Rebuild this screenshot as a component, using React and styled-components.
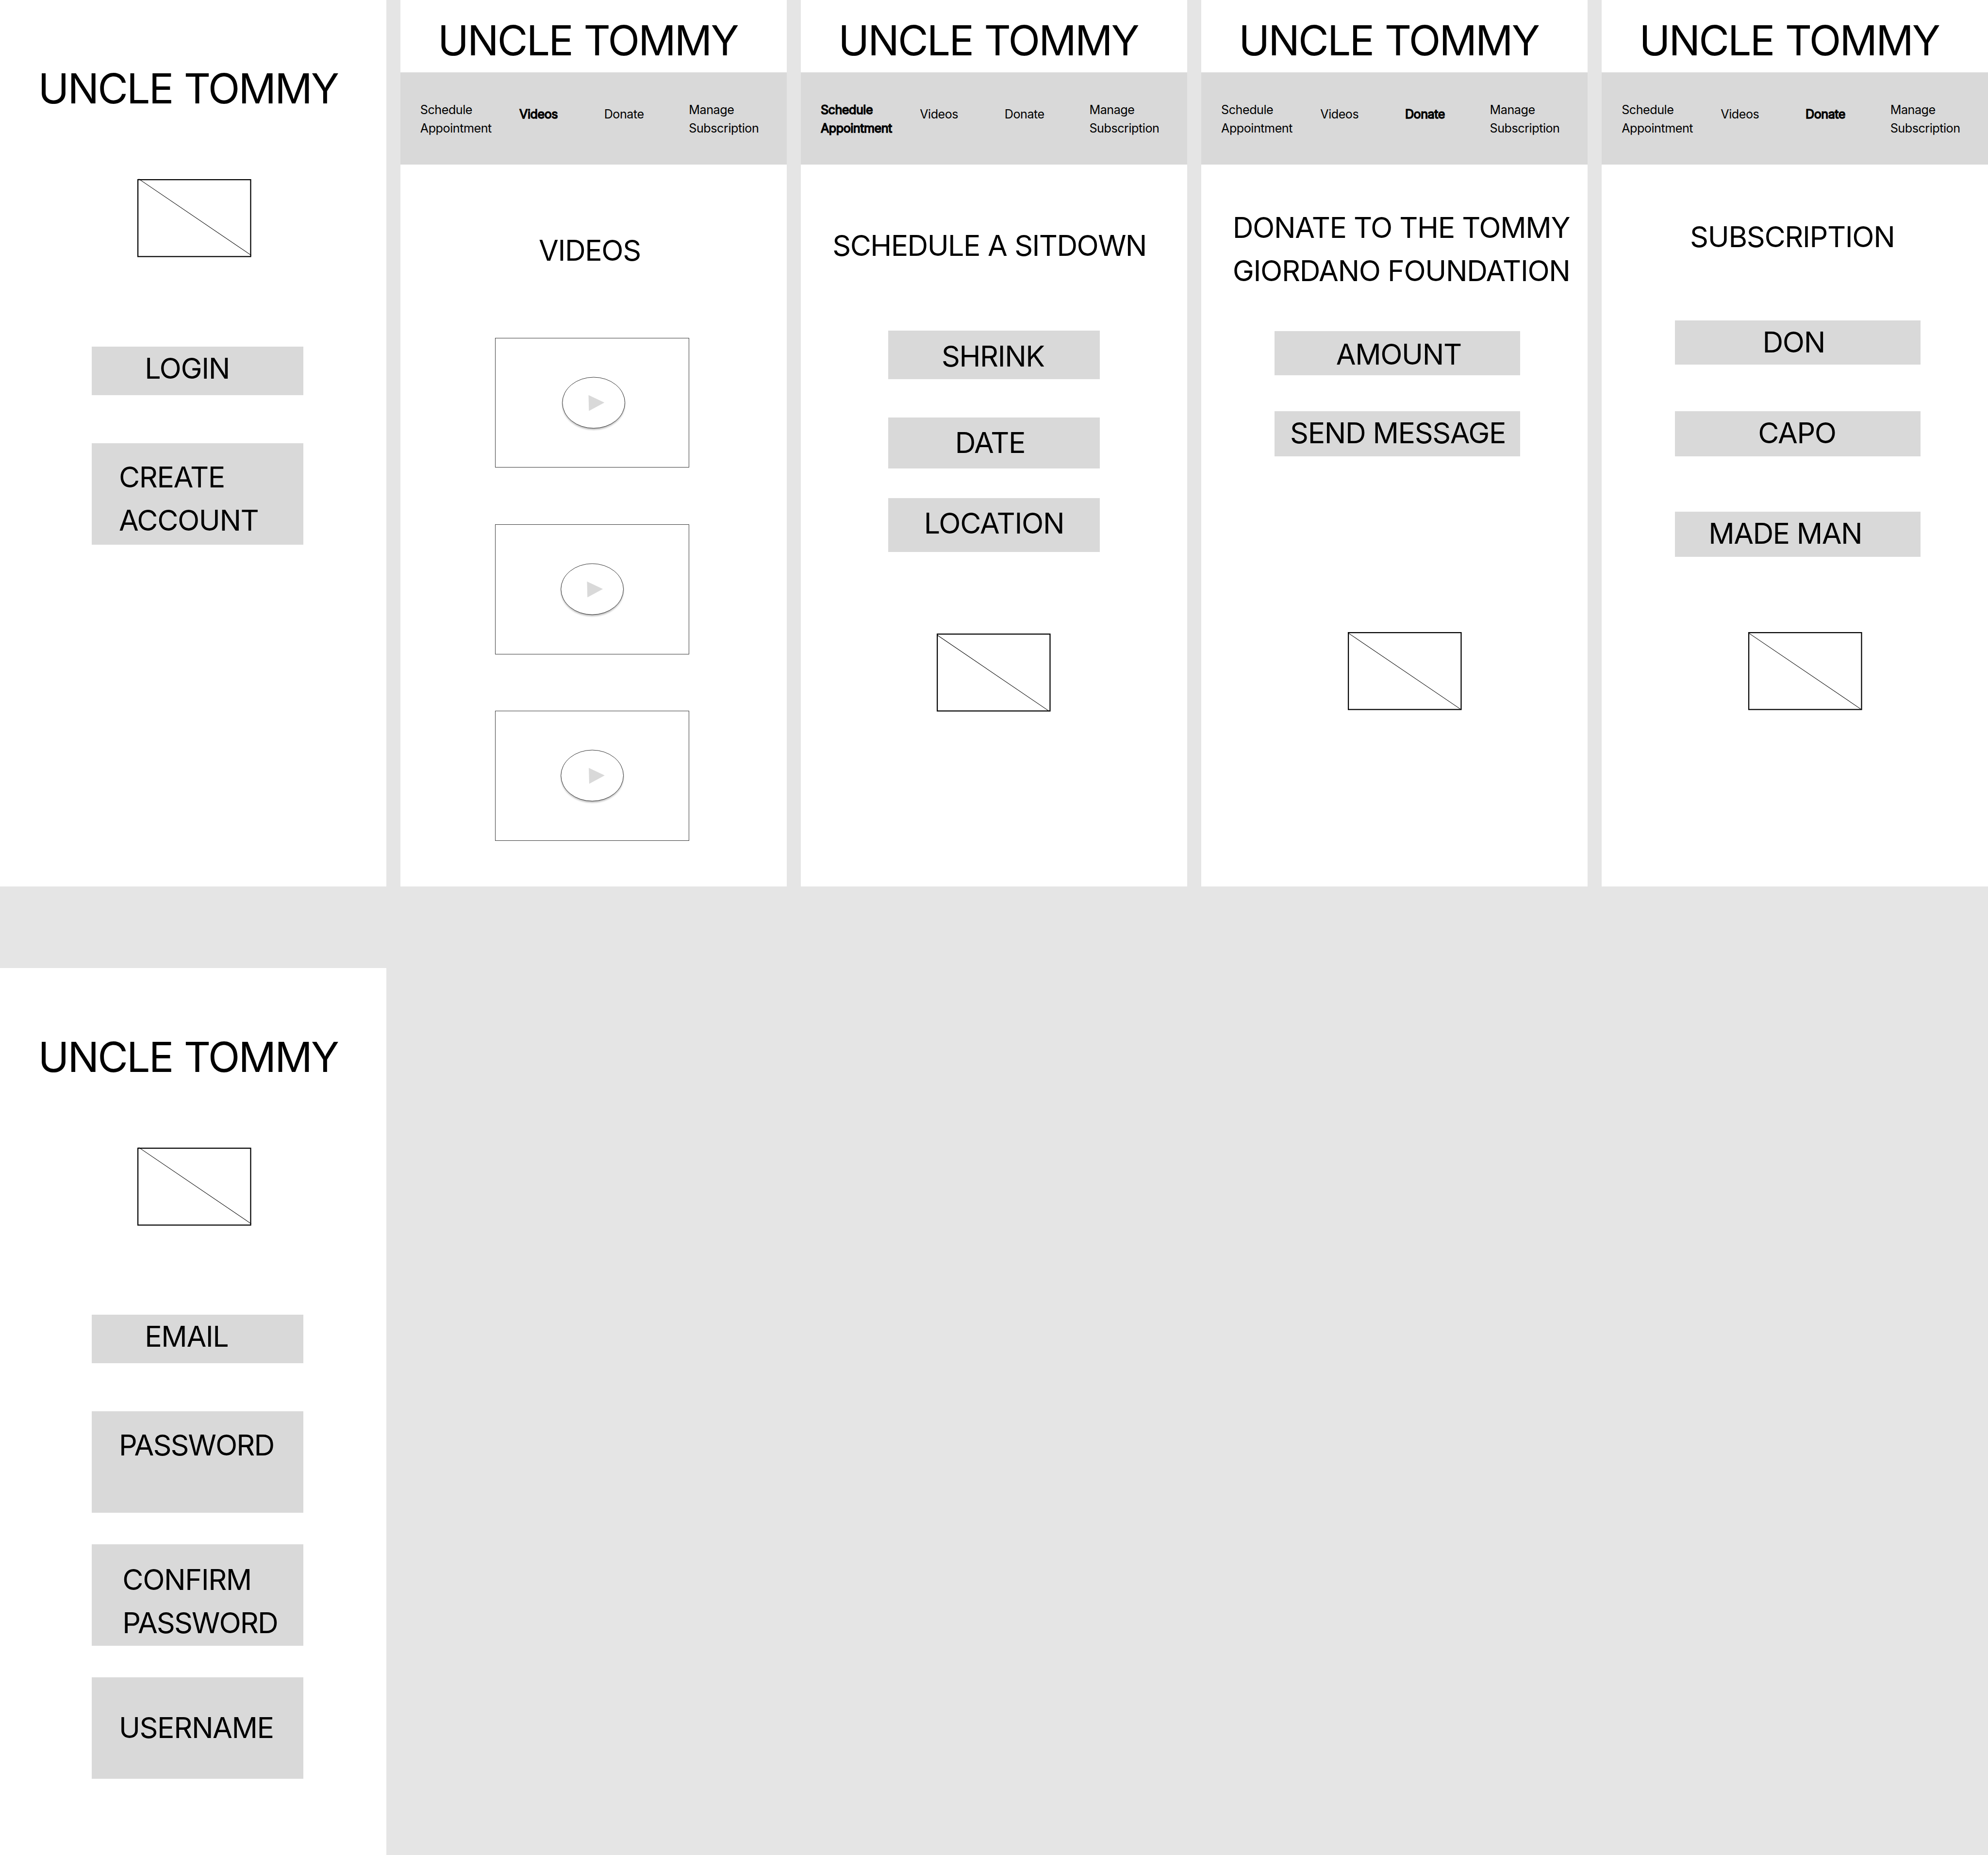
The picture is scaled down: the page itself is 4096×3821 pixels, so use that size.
import React from "react";
import styled, { createGlobalStyle } from "styled-components";

// Design units are converted to window pixels.
const u = (n) => `${((n * 4096) / 5535).toFixed(3)}px`;

const GlobalStyle = createGlobalStyle`
  html, body { margin: 0; padding: 0; background: #e5e5e5; }
  body { font-family: Inter, "Liberation Sans", sans-serif; color: #000; overflow: hidden; }
  *, *::before, *::after { box-sizing: border-box; }
  h1, h2, p { margin: 0; font-weight: 400; }
`;

const Board = styled.main`
  display: grid;
  grid-template-columns: repeat(5, ${u(1075)});
  grid-template-rows: repeat(2, ${u(2468)});
  column-gap: ${u(40)};
  row-gap: ${u(227)};
  width: 4096px;
  height: 3821px;
  overflow: hidden;
`;

const Screen = styled.section`
  display: flex;
  flex-direction: column;
  align-items: flex-start;
  background: #fff;
  overflow: hidden;
`;

const Brand = styled.h1`
  flex: none;
  font-size: ${u(116)};
  line-height: ${u(174)};
  letter-spacing: -0.0335em;
  word-spacing: 0.025em;
  white-space: nowrap;
  margin: ${(p) => (p.$compact ? `${u(25.5)} 0 ${u(1.5)} ${u(104)}` : `${u(160)} 0 0 ${u(106)}`)};
`;

const NavBar = styled.nav`
  flex: none;
  display: grid;
  grid-template-columns: ${u(276)} ${u(236)} ${u(236)} auto;
  align-items: start;
  width: 100%;
  height: ${u(257)};
  padding: ${u(80.5)} 0 0 ${u(55)};
  background: #d9d9d9;
`;

const NavItem = styled.a`
  font-size: ${u(34)};
  line-height: ${u(51.2)};
  letter-spacing: -0.019em;
  white-space: pre-line;
  padding-top: ${(p) => (p.$single ? u(12) : 0)};
  -webkit-text-stroke: ${(p) => (p.$active ? `${u(2)} #000` : "0")};
`;

const Heading = styled.h2`
  flex: none;
  font-size: ${u(80)};
  line-height: ${u(120)};
  letter-spacing: ${(p) => p.$tracking || -0.023}em;
  word-spacing: ${(p) => p.$wordGap || 0}em;
  white-space: pre;
  margin: ${(p) => u(p.$gap)} 0 0 ${(p) => u(p.$left)};
`;

const Field = styled.div`
  flex: none;
  width: ${(p) => u(p.$width)};
  height: ${(p) => u(p.$height)};
  margin: ${(p) => u(p.$gap)} 0 0 ${(p) => u(p.$left)};
  padding: ${(p) => u(1 + (p.$drop || 0))} 0 0 ${(p) => u(p.$inset)};
  background: #d9d9d9;
  font-size: ${u(80)};
  line-height: ${u(120)};
  letter-spacing: ${(p) => p.$tracking || -0.024}em;
  white-space: pre;
`;

const Line = styled.span`
  display: block;
  letter-spacing: ${(p) => (p.$tight ? "-0.032em" : "inherit")};
`;

const Picture = styled.svg`
  flex: none;
  display: block;
  width: ${u(317)};
  height: ${u(217)};
  overflow: visible;
  margin: ${(p) => u(p.$gap)} 0 0 ${(p) => u(p.$left)};
`;

const VideoList = styled.div`
  flex: none;
  display: flex;
  flex-direction: column;
  gap: ${u(157)};
  margin: ${u(182.5)} 0 0 ${u(263)};
`;

const VideoCard = styled.div`
  width: ${u(541)};
  height: ${u(362)};
  border: 1px solid rgba(0, 0, 0, 0.78);
`;

const PlayIcon = styled.svg`
  display: block;
  width: ${u(541)};
  height: ${u(362)};
  margin: -1px;
  overflow: visible;

  ellipse {
    fill: #fff;
    stroke: #000;
    stroke-width: 1.1;
    filter: drop-shadow(0 4px 2px rgba(0, 0, 0, 0.25));
  }
  path {
    fill: #d9d9d9;
  }
`;

const NAV = [
  ["schedule", "Schedule\nAppointment"],
  ["videos", "Videos"],
  ["donate", "Donate"],
  ["manage", "Manage\nSubscription"],
];

function Nav({ active }) {
  return (
    <NavBar>
      {NAV.map(([id, label]) => (
        <NavItem key={id} $active={id === active} $single={!label.includes("\n")}>
          {label}
        </NavItem>
      ))}
    </NavBar>
  );
}

function PicturePlaceholder({ gap, left, line }) {
  const [x1, y1, x2, y2] = line;
  return (
    <Picture $gap={gap} $left={left} viewBox="0 0 317 217">
      <rect x="1.5" y="1.5" width="314" height="214" fill="#fff" stroke="#000" strokeWidth="3" />
      <line x1={x1} y1={y1} x2={x2} y2={y2} stroke="#000" strokeWidth="1.4" />
    </Picture>
  );
}

function Video({ circle, arrow }) {
  return (
    <VideoCard>
      <PlayIcon viewBox="0 0 541 362">
        <ellipse cx={circle} cy="180.5" rx="87" ry="71" />
        <path d={`M${arrow} 159 l44.3 21 l-43.2 23.3 Z`} />
      </PlayIcon>
    </VideoCard>
  );
}

function FieldList({ fields, left, width }) {
  return fields.map((f) => (
    <Field
      key={f.label}
      $left={left}
      $width={width}
      $height={f.height}
      $gap={f.gap}
      $inset={f.inset}
      $drop={f.drop}
      $tracking={f.tracking}
    >
      {f.label.split("\n").map((text) => (
        <Line key={text} $tight={text === "PASSWORD"}>{text}</Line>
      ))}
    </Field>
  ));
}

function EntryScreen({ fields }) {
  return (
    <Screen>
      <Brand>UNCLE TOMMY</Brand>
      <PicturePlaceholder gap={165} left={382} line={[4, -0.5, 317, 212]} />
      <FieldList fields={fields} left={255} width={589} />
    </Screen>
  );
}

function FormScreen({ active, title, titleGap, titleLeft, titleTracking, titleWordGap, left, width, fields, picture }) {
  return (
    <Screen>
      <Brand $compact>UNCLE TOMMY</Brand>
      <Nav active={active} />
      <Heading $gap={titleGap} $left={titleLeft} $tracking={titleTracking} $wordGap={titleWordGap}>
        {title}
      </Heading>
      <FieldList fields={fields} left={left} width={width} />
      <PicturePlaceholder {...picture} />
    </Screen>
  );
}

export default function App() {
  return (
    <>
      <GlobalStyle />
      <Board>
        <EntryScreen
          fields={[
            { label: "LOGIN", gap: 249, height: 135, inset: 148 },
            { label: "CREATE\nACCOUNT", gap: 134, height: 282, inset: 76, drop: 34 },
          ]}
        />
        <Screen>
          <Brand $compact>UNCLE TOMMY</Brand>
          <Nav active="videos" />
          <Heading $gap={179.5} $left={385} $tracking={-0.024}>VIDEOS</Heading>
          <VideoList>
            <Video circle={274.5} arrow={260.2} />
            <Video circle={270.5} arrow={256} />
            <Video circle={270.5} arrow={261} />
          </VideoList>
        </Screen>
        <FormScreen
          active="schedule"
          title="SCHEDULE A SITDOWN"
          titleGap={167}
          titleLeft={88}
          titleTracking={-0.0275}
          titleWordGap={0.018}
          left={243}
          width={589}
          fields={[
            { label: "SHRINK", gap: 175, height: 135, inset: 148.5, drop: 12 },
            { label: "DATE", gap: 107, height: 142, inset: 186, drop: 10 },
            { label: "LOCATION", gap: 83, height: 150, inset: 99.5, drop: 9, tracking: -0.0215 },
          ]}
          picture={{ gap: 226, left: 378, line: [0, 3.4, 313, 216] }}
        />
        <FormScreen
          active="donate"
          title={"DONATE TO THE TOMMY\nGIORDANO FOUNDATION"}
          titleGap={116}
          titleLeft={87}
          left={203}
          width={684.5}
          fields={[
            { label: "AMOUNT", gap: 108, height: 123, inset: 172, drop: 4 },
            { label: "SEND MESSAGE", gap: 100, height: 125, inset: 44 },
          ]}
          picture={{ gap: 489, left: 408, line: [0, 1.8, 316, 216] }}
        />
        <FormScreen
          active="donate"
          title="SUBSCRIPTION"
          titleGap={142}
          titleLeft={245.5}
          left={203}
          width={684.5}
          fields={[
            { label: "DON", gap: 172, height: 123, inset: 244.5 },
            { label: "CAPO", gap: 130, height: 125, inset: 232 },
            { label: "MADE MAN", gap: 155, height: 125, inset: 94, tracking: -0.026 },
          ]}
          picture={{ gap: 209, left: 408, line: [0, 1.8, 316, 216] }}
        />
        <EntryScreen
          fields={[
            { label: "EMAIL", gap: 249, height: 135, inset: 148 },
            { label: "PASSWORD", gap: 134, height: 282, inset: 76, drop: 34 },
            { label: "CONFIRM\nPASSWORD", gap: 88, height: 282, inset: 86, drop: 38 },
            { label: "USERNAME", gap: 88, height: 282, inset: 76, drop: 80 },
          ]}
        />
      </Board>
    </>
  );
}
